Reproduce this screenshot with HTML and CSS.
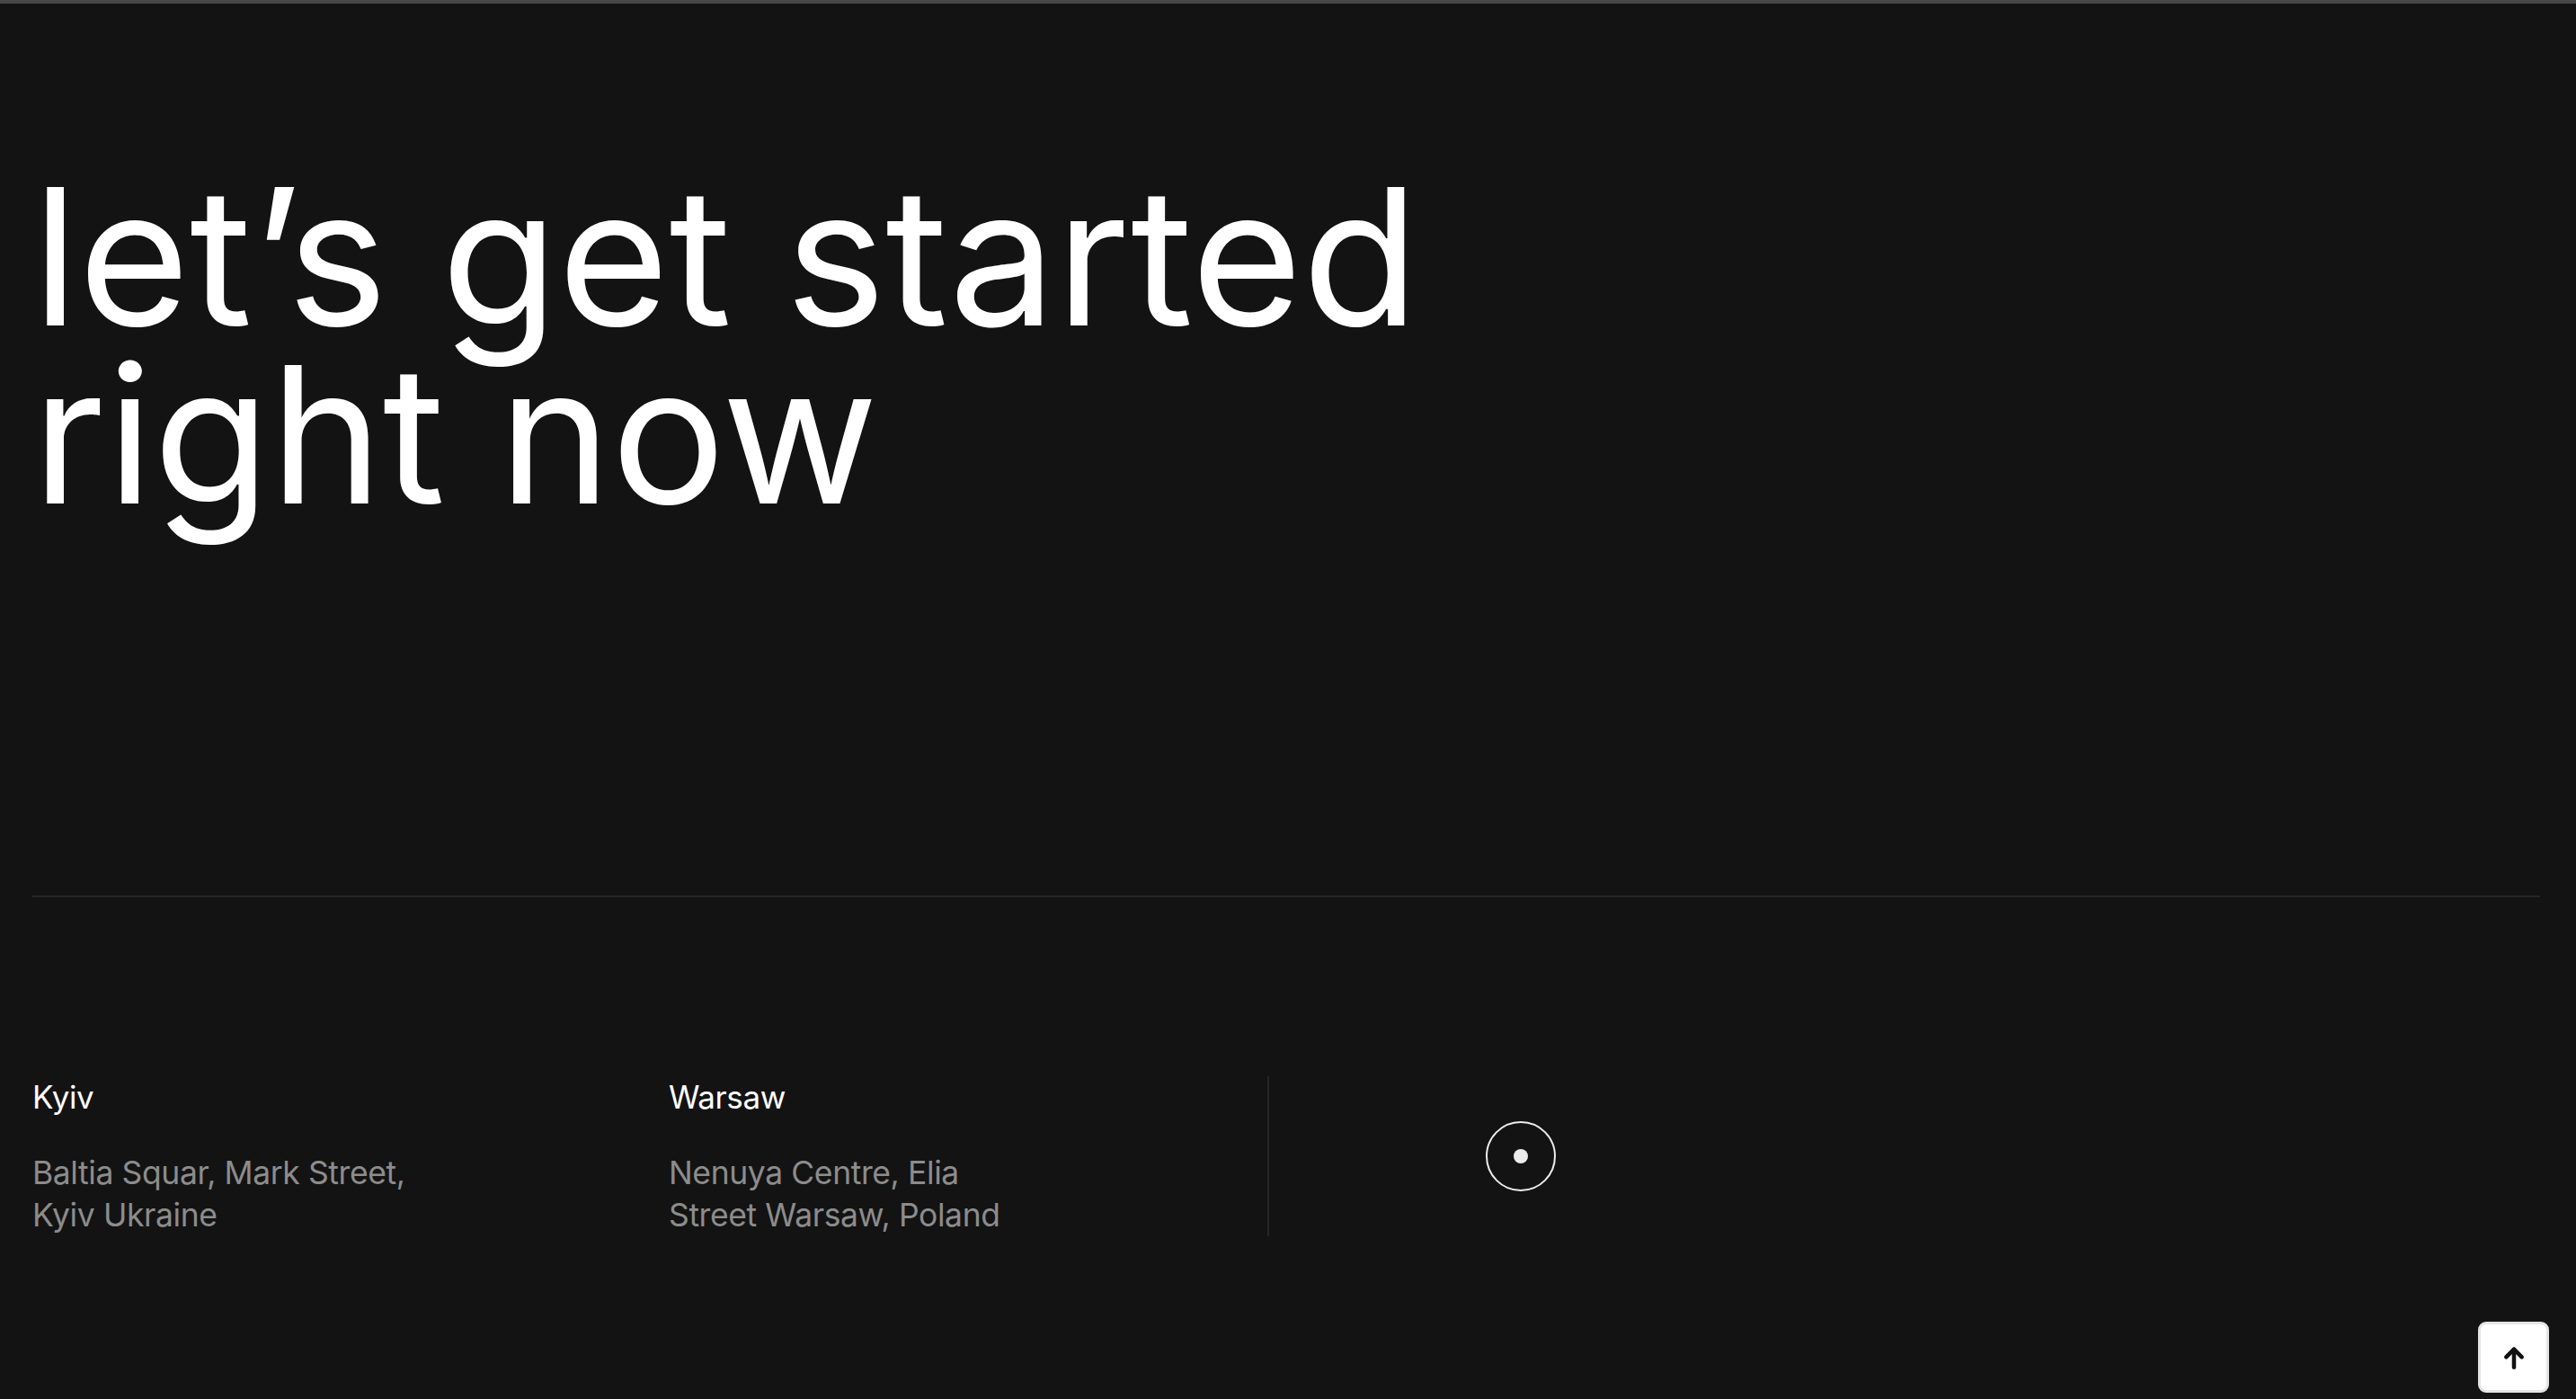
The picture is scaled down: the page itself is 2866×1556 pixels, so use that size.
FILE: index.html
```html
<!DOCTYPE html>
<html lang="en">
<head>
  <meta charset="UTF-8">
  <title>Contact</title>
  <meta name="viewport" content="width=device-width, initial-scale=1.0">
  <link rel="stylesheet" href="styles.css">
</head>
<body>
  <div class="page">
    <h1 class="hero-title">let’s get started<br>right now</h1>

    <div class="divider"></div>

    <div class="offices">
      <div class="office">
        <div class="office-city">Kyiv</div>
        <div class="office-address">Baltia Squar, Mark Street,<br>Kyiv Ukraine</div>
      </div>
      <div class="office office-last">
        <div class="office-city">Warsaw</div>
        <div class="office-address">Nenuya Centre, Elia<br>Street Warsaw, Poland</div>
      </div>
      <div class="cursor-dot">
        <span></span>
      </div>
    </div>
  </div>

  <button class="to-top" aria-label="Back to top">
    <svg width="32" height="32" viewBox="0 0 24 24" fill="none" stroke="#111" stroke-width="3.4" stroke-linecap="round" stroke-linejoin="round">
      <path d="M12 20V5"/>
      <path d="M5.5 11.5L12 5l6.5 6.5"/>
    </svg>
  </button>
</body>
</html>
```

FILE: styles.css
```css
html, body {
  margin: 0;
  height: 100%;
}
body {
  background-color: #131313;
  border-top: 4px solid #474747;
  box-sizing: border-box;
  font-family: Inter, "Noto Sans", sans-serif;
  color: #fff;
  overflow: hidden;
}
.page {
  padding: 0 40px 0 36px;
}
.hero-title {
  margin: 182px 0 0;
  font-size: 212px;
  font-weight: 400;
  line-height: 198px;
  letter-spacing: 0;
  color: #fff;
}
.divider {
  height: 2px;
  background-color: #262626;
  margin-top: 414px;
}
.offices {
  display: flex;
  align-items: center;
  margin-top: 199px;
}
.office {
  width: 708px;
}
.office-last {
  width: 666px;
  border-right: 2px solid #262626;
}
.office-city {
  font-size: 35px;
  line-height: 46px;
  letter-spacing: -0.4px;
  color: #fff;
  margin-bottom: 38px;
}
.office-address {
  font-size: 35.5px;
  line-height: 47px;
  letter-spacing: -0.4px;
  color: #8c8c8c;
}
.cursor-dot {
  margin-left: 241px;
  width: 74px;
  height: 74px;
  border: 2px solid #ececec;
  border-radius: 50%;
  display: flex;
  align-items: center;
  justify-content: center;
}
.cursor-dot span {
  width: 16px;
  height: 16px;
  border-radius: 50%;
  background-color: #ececec;
}
.to-top {
  position: fixed;
  right: 30px;
  bottom: 7px;
  width: 79px;
  height: 79px;
  background-color: #fff;
  border: 3px solid #e4e4e4;
  border-radius: 9px;
  display: flex;
  align-items: center;
  justify-content: center;
  padding: 0;
  cursor: pointer;
}
```
